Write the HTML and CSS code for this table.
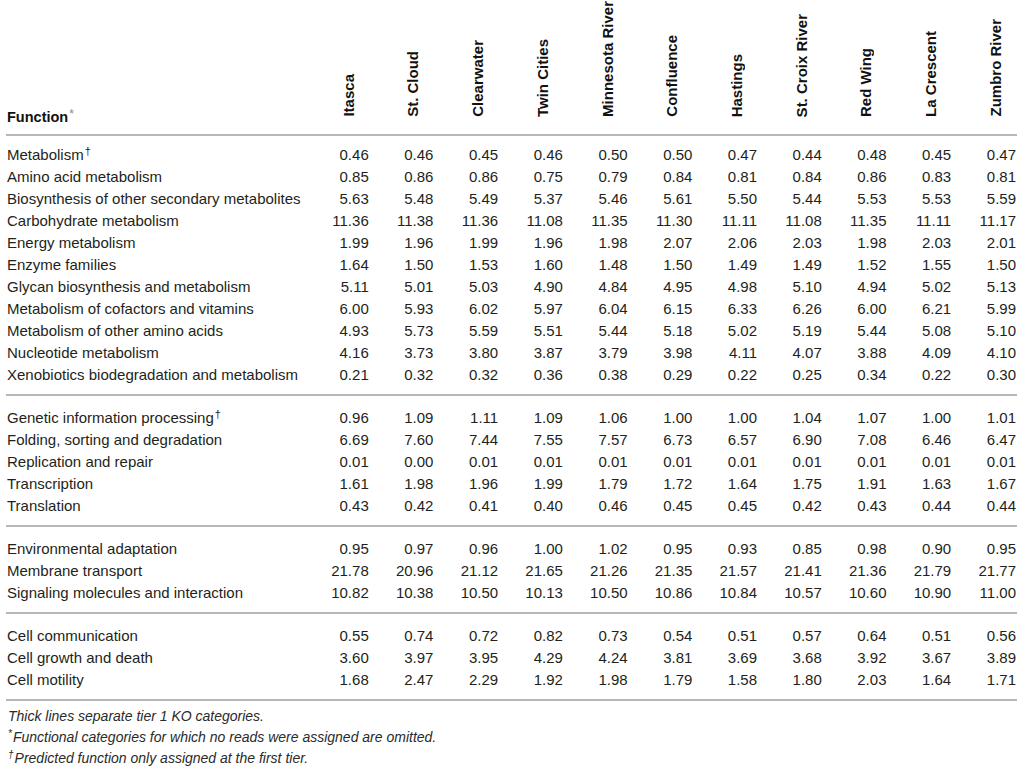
FILE: index.html
```html
<!DOCTYPE html>
<html lang="en">
<head>
<meta charset="utf-8">
<title>KO functional categories</title>
<link rel="stylesheet" href="styles.css">
</head>
<body>
<div class="page">
<table class="ko">
  <colgroup>
    <col class="c-func">
    <col span="11" class="c-val">
  </colgroup>
  <thead>
    <tr>
      <th class="h-func">Function<sup class="mark">*</sup></th>
      <th class="h-site"><span class="rot">Itasca</span></th>
      <th class="h-site"><span class="rot">St. Cloud</span></th>
      <th class="h-site"><span class="rot">Clearwater</span></th>
      <th class="h-site"><span class="rot">Twin Cities</span></th>
      <th class="h-site"><span class="rot">Minnesota River</span></th>
      <th class="h-site"><span class="rot">Confluence</span></th>
      <th class="h-site"><span class="rot">Hastings</span></th>
      <th class="h-site"><span class="rot">St. Croix River</span></th>
      <th class="h-site"><span class="rot">Red Wing</span></th>
      <th class="h-site"><span class="rot">La Crescent</span></th>
      <th class="h-site"><span class="rot">Zumbro River</span></th>
    </tr>
  </thead>
  <tbody class="g1">
    <tr class="first"><td>Metabolism<sup class="dag">†</sup></td><td>0.46</td><td>0.46</td><td>0.45</td><td>0.46</td><td>0.50</td><td>0.50</td><td>0.47</td><td>0.44</td><td>0.48</td><td>0.45</td><td>0.47</td></tr>
    <tr><td>Amino acid metabolism</td><td>0.85</td><td>0.86</td><td>0.86</td><td>0.75</td><td>0.79</td><td>0.84</td><td>0.81</td><td>0.84</td><td>0.86</td><td>0.83</td><td>0.81</td></tr>
    <tr><td>Biosynthesis of other secondary metabolites</td><td>5.63</td><td>5.48</td><td>5.49</td><td>5.37</td><td>5.46</td><td>5.61</td><td>5.50</td><td>5.44</td><td>5.53</td><td>5.53</td><td>5.59</td></tr>
    <tr><td>Carbohydrate metabolism</td><td>11.36</td><td>11.38</td><td>11.36</td><td>11.08</td><td>11.35</td><td>11.30</td><td>11.11</td><td>11.08</td><td>11.35</td><td>11.11</td><td>11.17</td></tr>
    <tr><td>Energy metabolism</td><td>1.99</td><td>1.96</td><td>1.99</td><td>1.96</td><td>1.98</td><td>2.07</td><td>2.06</td><td>2.03</td><td>1.98</td><td>2.03</td><td>2.01</td></tr>
    <tr><td>Enzyme families</td><td>1.64</td><td>1.50</td><td>1.53</td><td>1.60</td><td>1.48</td><td>1.50</td><td>1.49</td><td>1.49</td><td>1.52</td><td>1.55</td><td>1.50</td></tr>
    <tr><td>Glycan biosynthesis and metabolism</td><td>5.11</td><td>5.01</td><td>5.03</td><td>4.90</td><td>4.84</td><td>4.95</td><td>4.98</td><td>5.10</td><td>4.94</td><td>5.02</td><td>5.13</td></tr>
    <tr><td>Metabolism of cofactors and vitamins</td><td>6.00</td><td>5.93</td><td>6.02</td><td>5.97</td><td>6.04</td><td>6.15</td><td>6.33</td><td>6.26</td><td>6.00</td><td>6.21</td><td>5.99</td></tr>
    <tr><td>Metabolism of other amino acids</td><td>4.93</td><td>5.73</td><td>5.59</td><td>5.51</td><td>5.44</td><td>5.18</td><td>5.02</td><td>5.19</td><td>5.44</td><td>5.08</td><td>5.10</td></tr>
    <tr><td>Nucleotide metabolism</td><td>4.16</td><td>3.73</td><td>3.80</td><td>3.87</td><td>3.79</td><td>3.98</td><td>4.11</td><td>4.07</td><td>3.88</td><td>4.09</td><td>4.10</td></tr>
    <tr class="last"><td>Xenobiotics biodegradation and metabolism</td><td>0.21</td><td>0.32</td><td>0.32</td><td>0.36</td><td>0.38</td><td>0.29</td><td>0.22</td><td>0.25</td><td>0.34</td><td>0.22</td><td>0.30</td></tr>
  </tbody>
  <tbody class="g">
    <tr class="first"><td>Genetic information processing<sup class="dag">†</sup></td><td>0.96</td><td>1.09</td><td>1.11</td><td>1.09</td><td>1.06</td><td>1.00</td><td>1.00</td><td>1.04</td><td>1.07</td><td>1.00</td><td>1.01</td></tr>
    <tr><td>Folding, sorting and degradation</td><td>6.69</td><td>7.60</td><td>7.44</td><td>7.55</td><td>7.57</td><td>6.73</td><td>6.57</td><td>6.90</td><td>7.08</td><td>6.46</td><td>6.47</td></tr>
    <tr><td>Replication and repair</td><td>0.01</td><td>0.00</td><td>0.01</td><td>0.01</td><td>0.01</td><td>0.01</td><td>0.01</td><td>0.01</td><td>0.01</td><td>0.01</td><td>0.01</td></tr>
    <tr><td>Transcription</td><td>1.61</td><td>1.98</td><td>1.96</td><td>1.99</td><td>1.79</td><td>1.72</td><td>1.64</td><td>1.75</td><td>1.91</td><td>1.63</td><td>1.67</td></tr>
    <tr class="last"><td>Translation</td><td>0.43</td><td>0.42</td><td>0.41</td><td>0.40</td><td>0.46</td><td>0.45</td><td>0.45</td><td>0.42</td><td>0.43</td><td>0.44</td><td>0.44</td></tr>
  </tbody>
  <tbody class="g">
    <tr class="first"><td>Environmental adaptation</td><td>0.95</td><td>0.97</td><td>0.96</td><td>1.00</td><td>1.02</td><td>0.95</td><td>0.93</td><td>0.85</td><td>0.98</td><td>0.90</td><td>0.95</td></tr>
    <tr><td>Membrane transport</td><td>21.78</td><td>20.96</td><td>21.12</td><td>21.65</td><td>21.26</td><td>21.35</td><td>21.57</td><td>21.41</td><td>21.36</td><td>21.79</td><td>21.77</td></tr>
    <tr class="last"><td>Signaling molecules and interaction</td><td>10.82</td><td>10.38</td><td>10.50</td><td>10.13</td><td>10.50</td><td>10.86</td><td>10.84</td><td>10.57</td><td>10.60</td><td>10.90</td><td>11.00</td></tr>
  </tbody>
  <tbody class="g">
    <tr class="first"><td>Cell communication</td><td>0.55</td><td>0.74</td><td>0.72</td><td>0.82</td><td>0.73</td><td>0.54</td><td>0.51</td><td>0.57</td><td>0.64</td><td>0.51</td><td>0.56</td></tr>
    <tr><td>Cell growth and death</td><td>3.60</td><td>3.97</td><td>3.95</td><td>4.29</td><td>4.24</td><td>3.81</td><td>3.69</td><td>3.68</td><td>3.92</td><td>3.67</td><td>3.89</td></tr>
    <tr class="last"><td>Cell motility</td><td>1.68</td><td>2.47</td><td>2.29</td><td>1.92</td><td>1.98</td><td>1.79</td><td>1.58</td><td>1.80</td><td>2.03</td><td>1.64</td><td>1.71</td></tr>
  </tbody>
</table>
<div class="notes">
  <p>Thick lines separate tier 1 KO categories.</p>
  <p><sup class="fmark">*</sup>Functional categories for which no reads were assigned are omitted.</p>
  <p><sup class="fmark">†</sup>Predicted function only assigned at the first tier.</p>
</div>
</div>
</body>
</html>
```
FILE: styles.css
```css
html, body {
  margin: 0;
  padding: 0;
  background: #ffffff;
}

body {
  font-family: "Liberation Sans", Arial, Helvetica, sans-serif;
  color: #231f20;
}

.page {
  padding: 1px 0 0 6px;
  width: 1011px;
}

.ko {
  width: 1011px;
  table-layout: fixed;
  border-collapse: collapse;
  border-spacing: 0;
}

.c-func { width: 299px; }
.c-val { width: 64.727px; }

.ko th {
  font-weight: bold;
  font-size: 15px;
  vertical-align: bottom;
  padding: 0;
  color: #111;
}

.ko thead {
  border-bottom: 2px solid #b8b8b8;
}

.h-func {
  text-align: left;
  font-size: 14.5px !important;
  line-height: 17px;
  padding: 0 0 8px 1px !important;
}

.h-site {
  text-align: right;
  padding: 0 14px 14px 0 !important;
}

.rot {
  display: inline-block;
  writing-mode: vertical-rl;
  transform: rotate(180deg);
  line-height: 15px;
  white-space: nowrap;
}

.mark {
  font-weight: normal;
  font-size: 12px;
  color: #8a8a8a;
  vertical-align: 4px;
  line-height: 0;
  margin-left: 1px;
}

.ko td {
  font-size: 15px;
  line-height: 22px;
  padding: 0 1px 0 0;
  text-align: right;
  white-space: nowrap;
}

.ko td:first-child {
  text-align: left;
  padding-left: 1px;
}

.ko tbody {
  border-bottom: 2px solid #b8b8b8;
}

.g1 .first td { padding-top: 8px; }
.g .first td { padding-top: 11px; }
.ko .last td { padding-bottom: 8px; }

.dag {
  font-size: 11px;
  vertical-align: 5px;
  line-height: 0;
  margin-left: 1px;
}

.notes {
  padding: 5px 0 0 2px;
}

.notes p {
  margin: 0;
  font-size: 14px;
  line-height: 21px;
  font-style: italic;
  color: #2a2a2a;
}

.fmark {
  font-size: 10px;
  vertical-align: 5px;
  line-height: 0;
  margin-right: 1px;
}
```
